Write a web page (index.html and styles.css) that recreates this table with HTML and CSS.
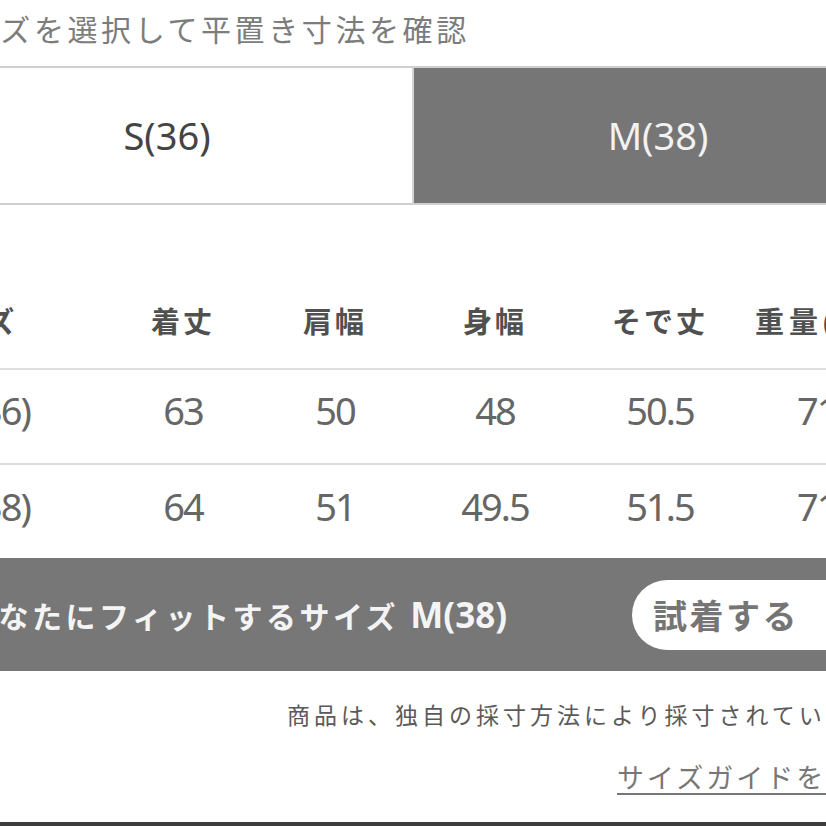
FILE: index.html
```html
<!DOCTYPE html>
<html lang="ja">
<head>
<meta charset="utf-8">
<title>サイズ</title>
<link rel="stylesheet" href="styles.css">
</head>
<body>
<div class="page">
  <h2 class="title">サイズを選択して平置き寸法を確認</h2>
  <div class="tabs">
    <div class="tab">S(36)</div>
    <div class="tab tab-active">M(38)</div>
  </div>
  <div class="table">
    <div class="row head">
      <div class="cell first">サイズ</div>
      <div class="cell">着丈</div>
      <div class="cell">肩幅</div>
      <div class="cell">身幅</div>
      <div class="cell">そで丈</div>
      <div class="cell last">重量(g)</div>
    </div>
    <div class="row data">
      <div class="cell first">S(36)</div>
      <div class="cell">63</div>
      <div class="cell">50</div>
      <div class="cell">48</div>
      <div class="cell">50.5</div>
      <div class="cell last">710</div>
    </div>
    <div class="row data">
      <div class="cell first">M(38)</div>
      <div class="cell">64</div>
      <div class="cell">51</div>
      <div class="cell">49.5</div>
      <div class="cell">51.5</div>
      <div class="cell last">715</div>
    </div>
  </div>
  <div class="fit">
    <span class="fit-text">あなたにフィットするサイズ <b class="fit-size">M(38)</b></span>
    <button class="try">試着する</button>
  </div>
  <p class="note">商品は、独自の採寸方法により採寸されています。</p>
  <p class="guide"><a class="guide-link" href="#">サイズガイドを見る</a></p>
</div>
<div class="bottom-bar"></div>
</body>
</html>
```

FILE: styles.css
```css
html, body {
  margin: 0;
  padding: 0;
  background: #fff;
  overflow: hidden;
  width: 826px;
  height: 826px;
}
body {
  font-family: "Noto Sans", "Noto Sans CJK JP", sans-serif;
  position: relative;
}
.page {
  margin-left: -78px;
  width: 1000px;
}
.title {
  margin: 10px 0 16px 0;
  padding-left: 12px;
  font-size: 30px;
  line-height: 40px;
  font-weight: 400;
  letter-spacing: 3.6px;
  color: #7c7c7c;
  white-space: nowrap;
}
.tabs {
  display: flex;
  border-top: 2px solid #cfcfcf;
  border-bottom: 2px solid #cfcfcf;
  height: 135px;
}
.tab {
  width: 492px;
  display: flex;
  align-items: center;
  justify-content: center;
  font-size: 38px;
  color: #444;
  border-right: 2px solid #d4d4d4;
  background: #fff;
  padding-bottom: 2px;
  box-sizing: border-box;
}
.tab-active {
  width: 488px;
  border-right: none;
  background: #767676;
  color: #f2f2f2;
}
.table {
  margin-top: 70px;
}
.row {
  display: grid;
  grid-template-columns: 184px 154px 150px 170px 160px 182px;
  align-items: center;
  text-align: center;
  box-sizing: border-box;
}
.head {
  height: 95px;
  border-bottom: 2px solid #dedede;
  font-size: 29px;
  font-weight: 700;
  letter-spacing: 3px;
  color: #505050;
  padding-bottom: 4px;
}
.data {
  height: 95px;
  border-bottom: 2px solid #dedede;
  font-size: 38px;
  letter-spacing: -2px;
  color: #666;
  padding-bottom: 14px;
}
.data + .data {
  height: 90px;
  border-bottom: none;
  padding-bottom: 8px;
}
.cell {
  white-space: nowrap;
}
.first {
  text-align: right;
}
.head .first {
  padding-right: 91px;
}
.data .first {
  padding-right: 76px;
}
.last {
  text-align: left;
}
.head .last {
  padding-left: 15px;
  letter-spacing: 5px;
}
.data .last {
  padding-left: 57px;
}
.fit {
  height: 113px;
  margin-top: 3px;
  background: #777;
  display: flex;
  align-items: center;
  padding-left: 43px;
}
.fit-text {
  font-size: 30px;
  letter-spacing: 3.5px;
  color: #f4f4f4;
  font-weight: 700;
  white-space: nowrap;
}
.fit-size {
  font-size: 35px;
  font-weight: 700;
  letter-spacing: 0;
}
.try {
  margin-left: auto;
  margin-right: 40px;
  width: 250px;
  height: 70px;
  border: none;
  border-radius: 35px;
  background: #fff;
  font-family: "Noto Sans CJK JP", sans-serif;
  font-size: 34px;
  font-weight: 700;
  letter-spacing: 2.5px;
  color: #757575;
  text-align: left;
  padding: 0 0 0 21px;
}
.note {
  margin: 30px 0 0 0;
  padding-left: 365px;
  font-size: 23px;
  line-height: 28px;
  letter-spacing: 4px;
  color: #5a5a5a;
  white-space: nowrap;
}
.guide {
  margin: 32px 0 0 0;
  padding-left: 695px;
  font-size: 27px;
  line-height: 34px;
  letter-spacing: 3px;
  white-space: nowrap;
}
.guide-link {
  color: #777;
  text-decoration: underline;
  text-decoration-thickness: 2px;
  text-underline-offset: 5px;
}
.bottom-bar {
  position: absolute;
  left: 0;
  right: 0;
  bottom: 0;
  height: 4px;
  background: #3d3d3d;
}
```
